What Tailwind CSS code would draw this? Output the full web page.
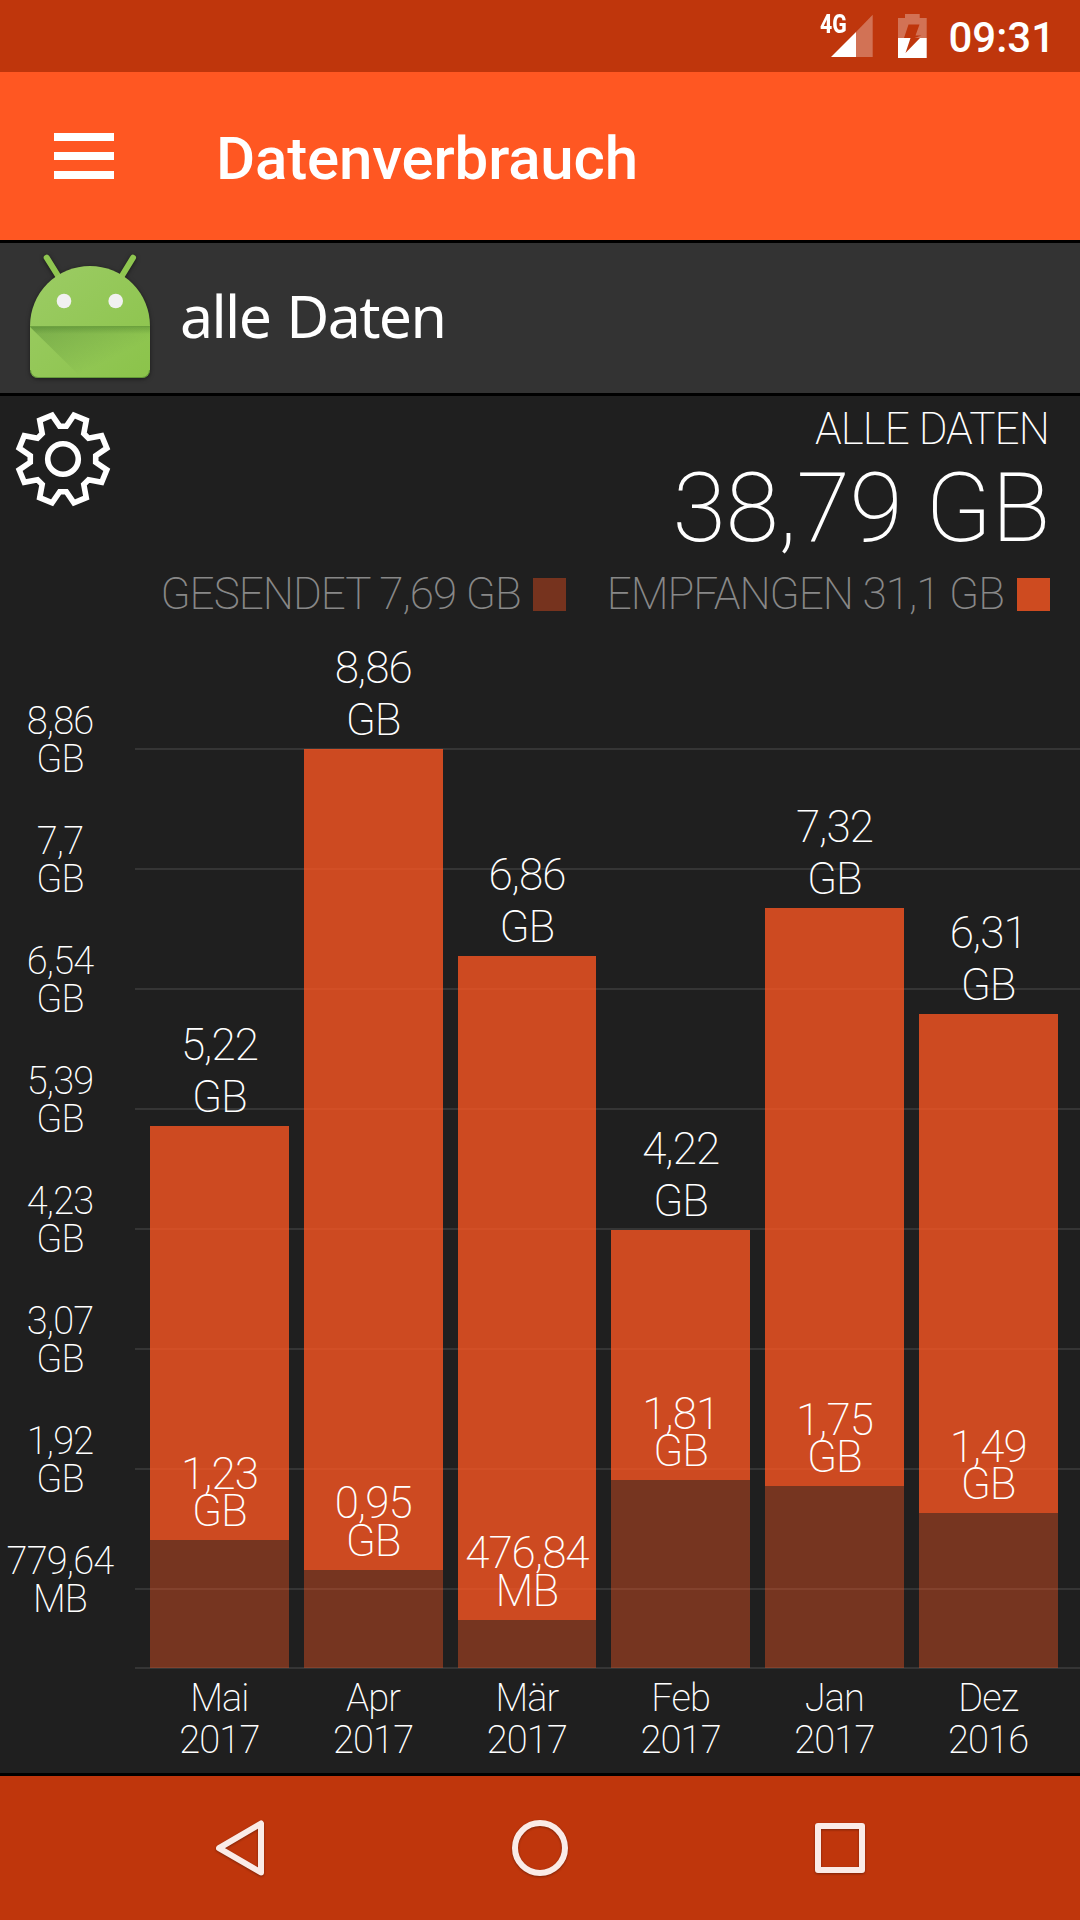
<!DOCTYPE html>
<html lang="de">
<head>
  <meta charset="UTF-8" />
  <meta name="viewport" content="width=device-width, initial-scale=1" />
  <title>Datenverbrauch</title>
  <script src="https://cdn.jsdelivr.net/npm/@tailwindcss/browser@4"></script>
</head>
<body class="w-[1080px] h-[1920px] overflow-hidden bg-black text-white font-['Roboto',sans-serif] flex flex-col">

  <!-- status bar -->
  <div class="h-[72px] shrink-0 bg-[#bf360c] flex items-start justify-end pr-[25px]">
    <div class="relative w-[54px] h-[72px]">
      <span class="absolute left-px top-[11px] text-[25px] leading-[27px] font-extrabold origin-left scale-x-[0.85]">4G</span>
      <svg class="absolute left-0 top-0" width="54" height="72" viewBox="820 0 54 72">
        <path d="M832 57L857 32V57Z" fill="#fff" />
        <path d="M857 32L873.7 14.7V57H857Z" fill="#fff" fill-opacity=".3" />
      </svg>
    </div>
    <svg class="ml-[25px]" width="29" height="72" viewBox="899 0 29 72">
      <path fill-rule="evenodd" d="M906 14h14.700v4H927.700V38H899V18h7ZM909.500 24.500L905 38H912L915.500 38L922.500 35.500H916.500L920.500 24.500Z" fill="#fff" fill-opacity=".3" />
      <path fill-rule="evenodd" d="M899 38H927.700V58H899ZM911.500 38L906.500 53L921 38Z" fill="#fff" />
    </svg>
    <span class="ml-[21px] mt-[13px] text-[42px] leading-[50px] font-medium">09:31</span>
  </div>

  <!-- app bar -->
  <header class="h-[168px] shrink-0 bg-[#ff5722] flex items-center">
    <div class="ml-[54px] w-[60px] flex flex-col gap-[11px]">
      <div class="h-2 bg-white"></div>
      <div class="h-2 bg-white"></div>
      <div class="h-2 bg-white"></div>
    </div>
    <h1 class="ml-[102px] mt-[5px] text-[60px] leading-[70px] font-medium tracking-[-0.15px]">Datenverbrauch</h1>
  </header>

  <!-- selected app -->
  <div class="mt-[3px] h-[150px] shrink-0 bg-[#333333] flex items-center">
    <svg width="170" height="150" viewBox="0 243 170 150">
      <defs>
        <linearGradient id="head" x1="0" y1="0" x2="1" y2="1">
          <stop offset="0" stop-color="#9ccc65" />
          <stop offset="1" stop-color="#8bc34a" />
        </linearGradient>
        <linearGradient id="fold" x1="0" y1="0" x2="0.7" y2="0.6">
          <stop offset="0" stop-color="#33691e" stop-opacity=".3" />
          <stop offset="1" stop-color="#33691e" stop-opacity="0" />
        </linearGradient>
        <linearGradient id="lip" x1="0" y1="0" x2="0" y2="1">
          <stop offset="0" stop-color="#33691e" stop-opacity=".3" />
          <stop offset="1" stop-color="#33691e" stop-opacity="0" />
        </linearGradient>
      </defs>
      <g class="drop-shadow-[0_1px_2px_rgba(0,0,0,0.5)]">
        <path d="M46.700 257.700L60 279M133 257.700L120 279" stroke="#8fc650" stroke-width="6" stroke-linecap="round" />
        <path d="M30 326a60 60 0 0 1 120 0V370a8 8 0 0 1 -8 8H38a8 8 0 0 1 -8 -8Z" fill="url(#head)" />
      </g>
      <path d="M30 327H150V370a8 8 0 0 1 -8 8H82Z" fill="url(#fold)" />
      <path d="M30 326.500H150V334H37Z" fill="url(#lip)" />
      <path d="M30 326.500H150" stroke="#558b2f" stroke-opacity=".5" />
      <path d="M30.500 370a7.500 7.500 0 0 0 7.500 7.500H142a7.500 7.500 0 0 0 7.500 -7.500" fill="none" stroke="#33691e" stroke-opacity=".45" />
      <circle cx="64" cy="301" r="7.300" fill="#f1f1f1" />
      <circle cx="115.700" cy="301" r="7.300" fill="#f1f1f1" />
    </svg>
    <span class="ml-[10px] mb-[6px] text-[59px] leading-[82px] tracking-[-1.6px] [word-spacing:2px] font-['Noto_Sans',sans-serif]">alle Daten</span>
  </div>

  <!-- usage -->
  <main class="mt-[3px] h-[1377px] shrink-0 bg-[#1f1f1f] font-extralight">
    <section class="h-[234px] flex justify-between items-start pt-[7px] pr-[30px]">
      <svg class="ml-3 mt-[5px]" width="102" height="102" viewBox="-51 -51 102 102" fill="none" stroke="#fff" stroke-width="5.600">
        <path id="gear" />
        <circle r="15.300" />
      </svg>
      <div class="flex flex-col items-end">
        <p class="pr-px text-[44px] leading-[52px] tracking-[-0.9px]">ALLE DATEN</p>
        <p class="text-[97px] leading-[107px] tracking-[-0.4px]">38,79 GB</p>
        <div class="mt-[6px] flex items-center text-[44px] leading-[52px] tracking-[-1px] text-[#888888]">
          <span>GESENDET 7,69 GB</span>
          <i class="ml-[12px] mr-[41px] w-[33px] h-[33px] bg-[#76331e]"></i>
          <span>EMPFANGEN 31,1 GB</span>
          <i class="ml-[13px] w-[33px] h-[33px] bg-[#ce4b20]"></i>
        </div>
      </div>
    </section>

    <section class="flex">
      <div id="axis" class="w-[120px] h-[1038px] pt-[72px] text-[38px] leading-[38px] tracking-[-0.8px] text-center"></div>
      <div class="relative w-[960px]">
        <div id="grid" class="absolute left-[15px] right-0 top-[118px] h-[921px] overflow-hidden border-b-2 border-[#353535]"></div>
        <div id="bars" class="relative h-[1038px] pl-[30px] pr-[22.5px] flex items-end gap-[15px]"></div>
        <div id="months" class="pl-[30px] pr-[22.5px] pt-[9px] flex gap-[15px] text-[38px] leading-[42px] tracking-[-0.9px] text-center"></div>
      </div>
    </section>
  </main>

  <!-- navigation -->
  <nav class="mt-[3px] h-[144px] shrink-0 bg-[#bf360c] flex">
    <svg class="drop-shadow-[0_1px_1px_rgba(0,0,0,0.35)]" width="1080" height="144" viewBox="0 1776 1080 144" fill="none" stroke="#faebe7" stroke-linejoin="round">
      <path d="M261 1823.500V1872.500L219 1848.200Z" stroke-width="6" />
      <circle cx="540" cy="1848" r="25" stroke-width="6" />
      <rect x="818" y="1826" width="44" height="44" stroke-width="6" />
    </svg>
  </nav>

  <script>
    const ticks = ['8,86 GB', '7,7 GB', '6,54 GB', '5,39 GB', '4,23 GB', '3,07 GB', '1,92 GB', '779,64 MB'];

    // total / sent are bar heights in px
    const data = [
      { month: 'Mai', year: 2017, total: 542, sent: 128, totalText: '5,22 GB', sentText: '1,23 GB' },
      { month: 'Apr', year: 2017, total: 919, sent: 98.5, totalText: '8,86 GB', sentText: '0,95 GB' },
      { month: 'Mär', year: 2017, total: 712.3, sent: 48.5, totalText: '6,86 GB', sentText: '476,84 MB' },
      { month: 'Feb', year: 2017, total: 437.8, sent: 187.8, totalText: '4,22 GB', sentText: '1,81 GB' },
      { month: 'Jan', year: 2017, total: 759.6, sent: 182, totalText: '7,32 GB', sentText: '1,75 GB' },
      { month: 'Dez', year: 2016, total: 654.4, sent: 154.6, totalText: '6,31 GB', sentText: '1,49 GB' },
    ];

    const twoLines = text => text.replace(' ', '<br>');

    document.getElementById('axis').innerHTML = ticks
      .map(t => `<div class="h-[120px]">${twoLines(t)}</div>`).join('');

    document.getElementById('grid').innerHTML = ticks
      .map(() => '<div class="h-[120px] border-t-2 border-[#353535]"></div>').join('');

    document.getElementById('bars').innerHTML = data.map(d => `
      <div class="w-[138.75px] text-[44px] tracking-[-1px] text-center">
        <div class="leading-[52px] pb-[3px]">${twoLines(d.totalText)}</div>
        <div class="bg-[#ff5722]/78 flex flex-col justify-end" style="height:${d.total - d.sent}px">
          <div class="leading-[37.5px] pb-[9.5px]">${twoLines(d.sentText)}</div>
        </div>
        <div class="bg-[#ff5722]/39" style="height:${d.sent}px"></div>
      </div>`).join('');

    document.getElementById('months').innerHTML = data
      .map(d => `<div class="w-[138.75px]">${d.month}<br>${d.year}</div>`).join('');

    // one tooth of the gear, turned eight times
    const tooth = [[3.3, -32.7], [10.9, -43.8], [23.3, -38.7], [20.8, -25.5]];
    const points = [];
    for (let i = 0; i < 8; i++) {
      const a = i * Math.PI / 4;
      tooth.forEach(([x, y]) => points.push([
        (x * Math.cos(a) - y * Math.sin(a)).toFixed(2),
        (x * Math.sin(a) + y * Math.cos(a)).toFixed(2),
      ].join(' ')));
    }
    document.getElementById('gear').setAttribute('d', 'M' + points.join('L') + 'Z');
  </script>
</body>
</html>
